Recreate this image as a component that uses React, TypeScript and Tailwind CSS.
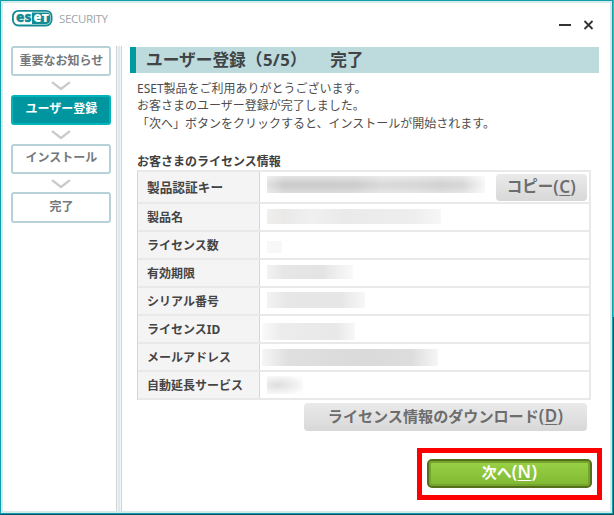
import type { ReactNode } from 'react';

type StepState = 'idle' | 'active';

interface Step {
  label: string;
  state: StepState;
}

interface LicenseRow {
  label: string;
  size: string;
  mask: string;
}

const steps: Step[] = [
  { label: '重要なお知らせ', state: 'idle' },
  { label: 'ユーザー登録', state: 'active' },
  { label: 'インストール', state: 'idle' },
  { label: '完了', state: 'idle' },
];

const rows: LicenseRow[] = [
  {
    label: '製品認証キー',
    size: 'h-8 text-[12.7px]',
    mask: 'ml-[7px] -mt-[5px] h-[17px] w-[218px] bg-[linear-gradient(to_bottom,#ffffff77,#ffffff00_45%,#ffffff00_60%,#ffffff55),linear-gradient(to_right,#e2e2e2,#cccccc_8%,#cdcdcd_40%,#dadada_52%,#d8d8d8_68%,#d2d2d2_80%,#d8d8d8_90%,#f8f8f8)]',
  },
  {
    label: '製品名',
    size: 'h-7 text-[12px]',
    mask: 'ml-[7px] -mt-px h-[15px] w-[174px] bg-[linear-gradient(to_right,#f1efec,#e9e9e9_10%,#f0f0f0_25%,#eaeaea_45%,#eeeeee_85%,#f7f7f7)]',
  },
  { label: 'ライセンス数', size: 'h-7 text-[12px]', mask: 'ml-[7px] mt-1 h-3 w-[15px] bg-[#f8f8f8]' },
  {
    label: '有効期限',
    size: 'h-7 text-[12px]',
    mask: 'ml-[7px] -mt-[2px] h-[14px] w-[86px] bg-[linear-gradient(to_right,#f3f3f3,#e6e6e6_20%,#e4e4e4_65%,#fafafa)]',
  },
  {
    label: 'シリアル番号',
    size: 'h-7 text-[12px]',
    mask: 'ml-[7px] -mt-[2px] h-4 w-[98px] bg-[linear-gradient(to_right,#f3f3f3,#e7e7e7_20%,#e6e6e6_75%,#f7f7f7)]',
  },
  {
    label: 'ライセンスID',
    size: 'h-7 text-[12px]',
    mask: 'ml-[2px] mt-[5px] h-[17px] w-[93px] bg-[linear-gradient(to_right,#fafafa,#ececec_20%,#e8e8e8_80%,#f8f8f8)]',
  },
  {
    label: 'メールアドレス',
    size: 'h-7 text-[12px]',
    mask: 'ml-[2px] mt-px h-[17px] w-[176px] bg-[linear-gradient(to_right,#f6f6f6,#dfdfdf_15%,#dadada_60%,#dddddd_85%,#f6f6f6)]',
  },
  {
    label: '自動延長サービス',
    size: 'h-7 text-[12px]',
    mask: 'ml-[7px] h-[18px] w-[36px] bg-[radial-gradient(ellipse_at_30%_50%,#dedede,#eeeeee_45%,#fdfdfd_85%)]',
  },
];

function Logo() {
  return (
    <div className="flex items-center">
      <svg width="41" height="25" viewBox="0 -4 41 25">
        <rect x="0.9" y="0.9" width="38.700" height="14.600" rx="5.500" fill="#fff" stroke="#128b94" strokeWidth="1.800" />
        <path d="M20 2.500H34.500c2.500 0 3.800 1.700 3.800 5.700s-1.300 5.700-3.800 5.700H20Z" fill="#128b94" />
        <text x="4" y="12.300" fontSize="13.500" fontWeight="800" fontFamily="Open Sans" fill="#128b94" stroke="#128b94" strokeWidth="0.300" textLength="15.500" lengthAdjust="spacingAndGlyphs">es</text>
        <text x="21.500" y="12.300" fontSize="13.500" fontWeight="800" fontFamily="Open Sans" fill="#fff" textLength="8" lengthAdjust="spacingAndGlyphs">e</text>
        <text x="29.500" y="12.300" fontSize="10.500" fontWeight="800" fontFamily="Open Sans" fill="#fff" textLength="7.500" lengthAdjust="spacingAndGlyphs">T</text>
      </svg>
      <span className="ml-[6px] font-['Open_Sans',sans-serif] text-[11.500px] leading-[25px] tracking-[-0.35px] text-[#a0a5a8]">
        SECURITY
      </span>
    </div>
  );
}

function StepBox({ label, state }: Step) {
  const colors =
    state === 'active'
      ? 'border-[#00b5ba] bg-[#0096a0] text-white'
      : 'border-[#b7d1d8] bg-white text-[#74787a]';
  return (
    <div className={`flex h-[30.300px] w-[100px] items-center justify-center rounded-[3px] border-2 pb-px text-[12px] font-bold ${colors}`}>
      {label}
    </div>
  );
}

function Chevron() {
  return (
    <svg className="mt-[5px] mb-[3.500px] block" width="20" height="10" viewBox="0 0 20 10">
      <path d="M1 1.200 10 8 19 1.200" fill="none" stroke="#cacaca" strokeWidth="2.300" />
    </svg>
  );
}

function AccessKey({ letter }: { letter: string }) {
  return (
    <span className="text-[17px] font-semibold tracking-[0.3px]">
      (<u className="decoration-1 underline-offset-2">{letter}</u>)
    </span>
  );
}

function GrayButton({ className, children }: { className: string; children: ReactNode }) {
  return (
    <button
      className={`flex items-center justify-center rounded-[4px] bg-linear-to-b from-[#eaeaea] to-[#d8d8d8] pb-px font-bold text-[#6d6d6d] ${className}`}
    >
      {children}
    </button>
  );
}

export default function App() {
  return (
    <div className="flex h-[515px] w-[614px] flex-col bg-linear-to-b from-[#3fbcc2] from-[317px] to-[#00575f] to-[317px] pr-px pb-px font-['Noto_Sans','Noto_Sans_CJK_JP',sans-serif]">
      <div className="flex min-h-0 flex-1 flex-col border border-[#109daa]">
        <div className="flex min-h-0 flex-1 flex-col border-2 border-[#d6eaec] bg-white">
          <header className="flex h-[43px] shrink-0 items-start justify-between pt-[3px] pr-[15px] pl-[9px]">
            <Logo />
            <svg className="mt-[13px]" width="36" height="12" viewBox="0 0 36 12">
              <path d="M0 6h12" stroke="#333" strokeWidth="2" />
              <path d="m25.500 2 8 8m0-8-8 8" stroke="#333" strokeWidth="1.800" />
            </svg>
          </header>

          <div className="flex min-h-0 flex-1">
            <nav className="flex w-[113px] shrink-0 flex-col pl-[8.400px]">
              {steps.map((step, i) => (
                <div key={step.label} className="flex w-[100px] flex-col items-center">
                  {i > 0 && <Chevron />}
                  <StepBox {...step} />
                </div>
              ))}
            </nav>
            <div className="flex w-[6px] shrink-0 justify-center border-x border-[#d0d2d3] bg-[#f3f5f6]">
              <div className="w-[2px] bg-[#d9ebee]" />
            </div>

            <main className="flex flex-1 flex-col pt-px pr-[11px] pl-2">
              <h1 className="flex h-[26px] w-[469px] items-center border-l-[6px] border-[#009aa1] bg-[#bddadc] pl-[10px] text-[16.700px] font-bold whitespace-pre text-[#404447]">
                ユーザー登録
                <span className="tracking-[0.4px]">（5/5）</span>
                <span className="ml-[23px]">完了</span>
              </h1>
              <div className="mt-[6.500px] ml-[7px] text-[12px] leading-[17.500px] text-[#4d4d4d]">
                <p>ESET製品をご利用ありがとうございます。</p>
                <p>お客さまのユーザー登録が完了しました。</p>
                <p>「次へ」ボタンをクリックすると、インストールが開始されます。</p>
              </div>
              <h2 className="mt-[21.500px] ml-[7px] text-[12px] leading-[16px] font-bold text-[#404040]">お客さまのライセンス情報</h2>

              <div className="ml-[7px] w-[454px] shrink-0 border-t-2 border-r-2 border-l border-t-[#e9e9e9] border-r-[#e9e9e9] border-l-[#d6d6d6]">
                {rows.map((row, i) => (
                  <div key={row.label} className={`flex border-b-2 border-[#e9e9e9] ${row.size}`}>
                    <div className="flex w-[122px] items-center border-r border-[#d6d6d6] bg-[#f4f4f4] pt-[3px] pl-[9px] font-bold text-[#444]">
                      {row.label}
                    </div>
                    <div className="flex flex-1 items-center">
                      <div className={row.mask} />
                      {i === 0 && (
                        <GrayButton className="mt-px mr-[2px] ml-auto h-[27px] w-[91px] text-[15.500px]">
                          コピー
                          <AccessKey letter="C" />
                        </GrayButton>
                      )}
                    </div>
                  </div>
                ))}
              </div>

              <GrayButton className="mt-[3px] ml-[174px] h-[28px] w-[283px] shrink-0 text-[15.100px]">
                ライセンス情報のダウンロード
                <AccessKey letter="D" />
              </GrayButton>

              <div className="mt-[17px] ml-[287px] flex h-[52px] w-[185px] shrink-0 items-end justify-center border-[5px] border-[#ff0000] pb-[7px]">
                <button className="flex h-[29px] w-[165px] items-center justify-center rounded-[5px] border-2 border-[#55701c] bg-linear-to-b from-[#9ad347] to-[#7fb732] pb-[2px] text-[15px] font-bold text-white shadow-[inset_0_0_0_2px_#76a52d]">
                  次へ
                  <AccessKey letter="N" />
                </button>
              </div>
            </main>
          </div>
        </div>
      </div>
    </div>
  );
}
